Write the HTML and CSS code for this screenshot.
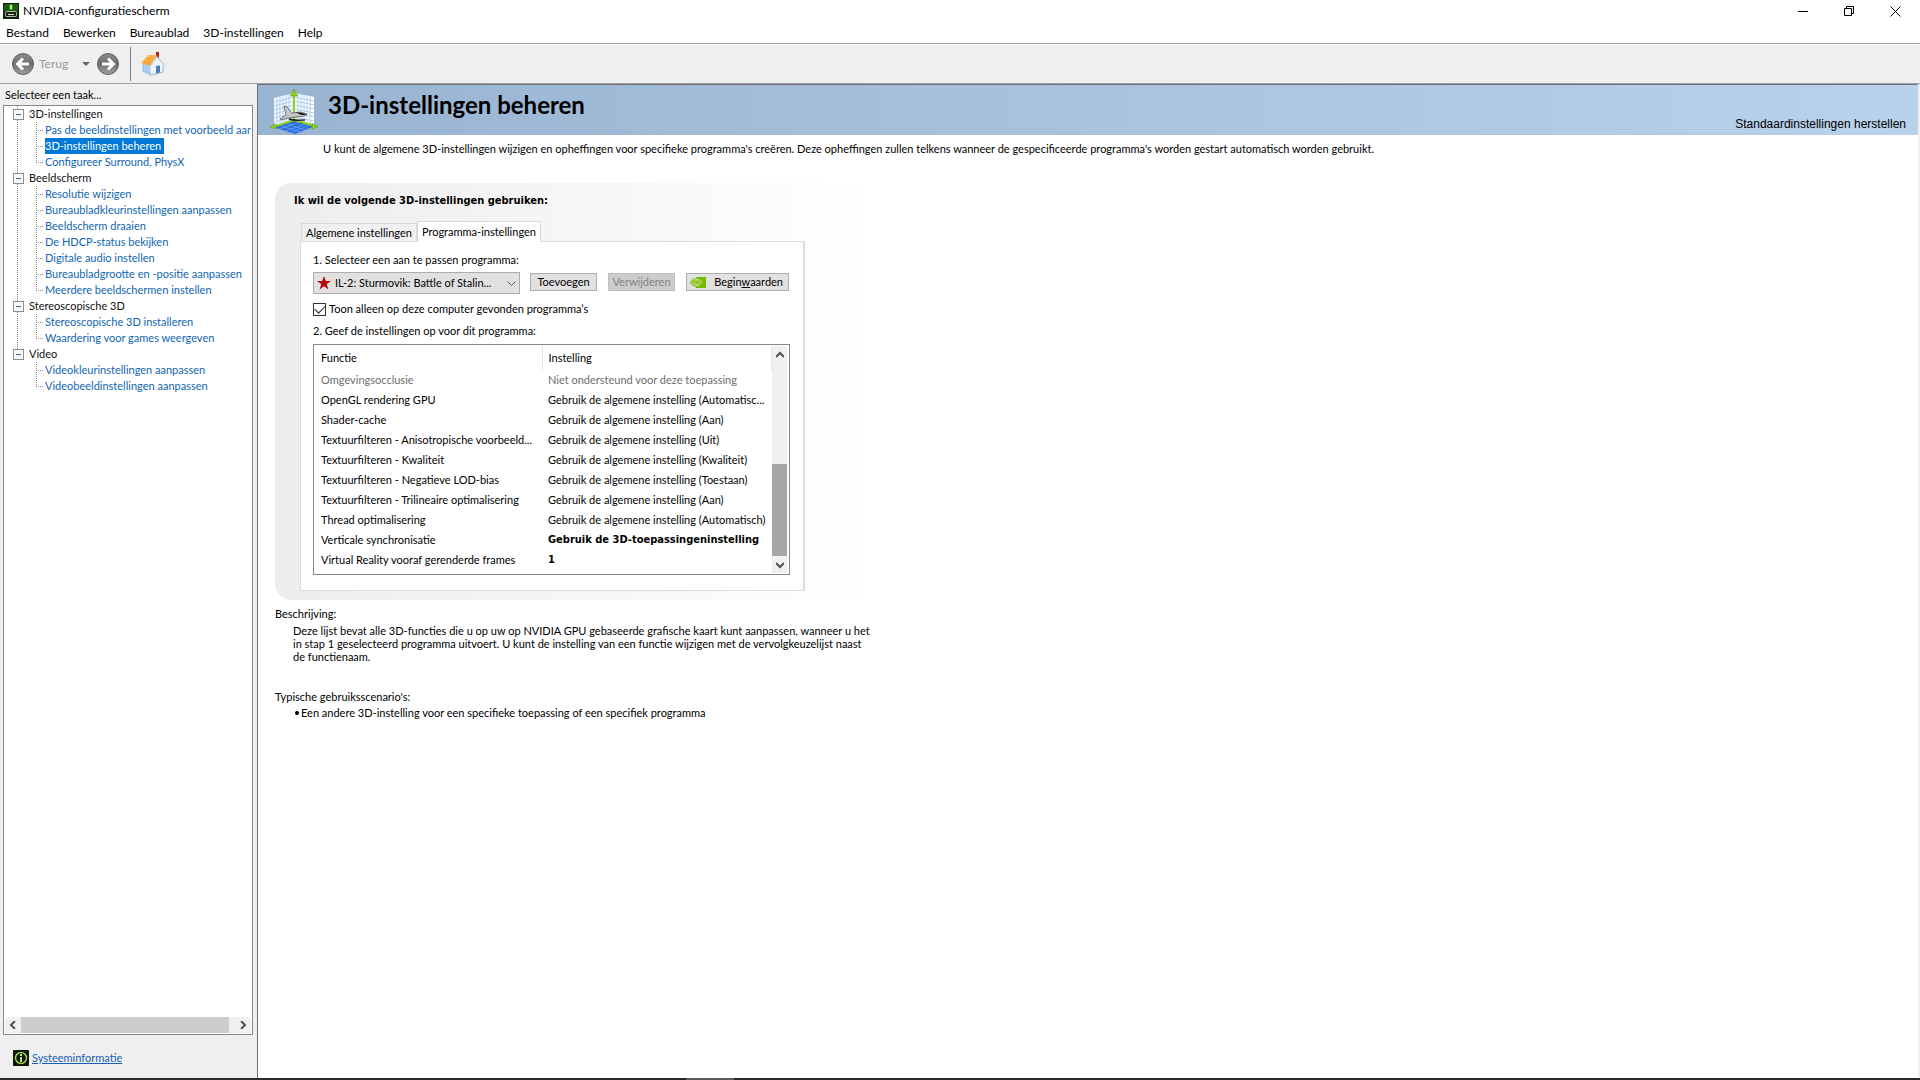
FILE: index.html
```
<!DOCTYPE html>
<html lang="nl">
<head>
<meta charset="utf-8">
<meta name="viewport" content="width=device-width, initial-scale=1">
<title>NVIDIA-configuratiescherm</title>
<link rel="stylesheet" href="styles.css">
</head>
<body>
<header>
  <div class="titlebar">
    <svg class="app-icon" width="16" height="16" viewBox="0 0 16 16" aria-hidden="true"><rect width="16" height="16" fill="#10240c"/><rect x="1" y="1" width="14" height="7" fill="#1f5a14"/><path d="M6 1h4v6H6z" fill="#2b8a1c"/><path d="M7 2h2v4H7z" fill="#b6f080"/><rect x="2.500" y="8.500" width="11" height="5" rx="1" fill="#17230f" stroke="#a9bca4"/><path d="M5 11.500h6" stroke="#dfe8d8"/></svg>
    <h1 class="app-title">NVIDIA-configuratiescherm</h1>
    <div class="window-buttons">
      <button type="button" aria-label="Minimaliseren"><svg width="11" height="11" viewBox="0 0 11 11"><path d="M0 5.500h10" stroke="#000" fill="none"/></svg></button>
      <button type="button" aria-label="Herstellen"><svg width="11" height="11" viewBox="0 0 11 11"><path d="M.5 2.500h7v7h-7zM2.500 2.500v-2h7v7h-2" stroke="#000" fill="none"/></svg></button>
      <button type="button" aria-label="Sluiten"><svg width="11" height="11" viewBox="0 0 11 11"><path d="M.5.5l10 10M10.500.5l-10 10" stroke="#000" fill="none"/></svg></button>
    </div>
  </div>
  <nav class="menubar" aria-label="Menu">
    <button type="button">Bestand</button><button type="button">Bewerken</button><button type="button">Bureaublad</button><button type="button">3D-instellingen</button><button type="button">Help</button>
  </nav>
  <div class="toolbar">
    <button type="button" class="back" disabled>
      <svg width="24" height="24" viewBox="0 0 24 24"><defs><linearGradient id="ball" x1="0" y1="0" x2="0" y2="1"><stop offset="0" stop-color="#8e8e8e"/><stop offset=".5" stop-color="#6c6c6c"/><stop offset="1" stop-color="#a2a2a2"/></linearGradient></defs><circle cx="12" cy="12" r="10.500" fill="url(#ball)" stroke="#5f5f5f"/><path d="M18 12H7M12 6.500L6.500 12l5.500 5.500" fill="none" stroke="#fff" stroke-width="3"/></svg>
      <span>Terug</span>
    </button>
    <button type="button" class="history" aria-label="Geschiedenis"><svg width="8" height="4" viewBox="0 0 8 4"><path d="M0 0h8L4 4z" fill="#666"/></svg></button>
    <button type="button" aria-label="Vooruit"><svg width="24" height="24" viewBox="0 0 24 24"><circle cx="12" cy="12" r="10.500" fill="url(#ball)" stroke="#5f5f5f"/><path d="M6 12h11M12 6.500l5.500 5.500-5.500 5.500" fill="none" stroke="#fff" stroke-width="3"/></svg></button>
    <span class="divider"></span>
    <button type="button" aria-label="Startpagina"><svg width="24" height="24" viewBox="0 0 24 24"><path d="M15 0h3v6h-3z" fill="#a8281c"/><path d="M2 12l8 1v10l-8-4z" fill="#a9cdf0"/><path d="M9 13l7-8 6 7v8l-12 3z" fill="#eef5fc"/><path d="M2 12v7l8 4 12-3v-7" fill="none" stroke="#8db6de"/><path d="M0 11L7 3l9 0-7 11z" fill="#f7a63c"/><path d="M1 11l6-7h8" fill="none" stroke="#fcc878"/><path d="M9 14l7-9 7.500 8" fill="none" stroke="#c3cfdb" stroke-width="1.400"/><path d="M15 14l4-.5v7l-4 1z" fill="#4a7cba"/></svg></button>
  </div>
</header>
<div class="workspace">
  <aside class="sidebar">
    <h2 class="side-title">Selecteer een taak...</h2>
    <div class="tree-box">
      <ul class="tree">
        <li><span class="node">3D-instellingen</span>
          <ul>
            <li><a href="#">Pas de beeldinstellingen met voorbeeld aan</a></li>
            <li><a href="#" class="selected">3D-instellingen beheren</a></li>
            <li><a href="#">Configureer Surround, PhysX</a></li>
          </ul></li>
        <li><span class="node">Beeldscherm</span>
          <ul>
            <li><a href="#">Resolutie wijzigen</a></li>
            <li><a href="#">Bureaubladkleurinstellingen aanpassen</a></li>
            <li><a href="#">Beeldscherm draaien</a></li>
            <li><a href="#">De HDCP-status bekijken</a></li>
            <li><a href="#">Digitale audio instellen</a></li>
            <li><a href="#">Bureaubladgrootte en -positie aanpassen</a></li>
            <li><a href="#">Meerdere beeldschermen instellen</a></li>
          </ul></li>
        <li><span class="node">Stereoscopische 3D</span>
          <ul>
            <li><a href="#">Stereoscopische 3D installeren</a></li>
            <li><a href="#">Waardering voor games weergeven</a></li>
          </ul></li>
        <li><span class="node">Video</span>
          <ul>
            <li><a href="#">Videokleurinstellingen aanpassen</a></li>
            <li><a href="#">Videobeeldinstellingen aanpassen</a></li>
          </ul></li>
      </ul>
      <div class="hscroll">
        <button type="button" aria-label="Naar links"><svg width="8" height="8" viewBox="0 0 8 8"><path d="M6 0L2 4l4 4" fill="none" stroke="#505050" stroke-width="2"/></svg></button>
        <span class="thumb"></span>
        <button type="button" aria-label="Naar rechts"><svg width="8" height="8" viewBox="0 0 8 8"><path d="M2 0l4 4-4 4" fill="none" stroke="#505050" stroke-width="2"/></svg></button>
      </div>
    </div>
    <div class="sysinfo">
      <svg width="16" height="16" viewBox="0 0 16 16" aria-hidden="true"><rect width="16" height="16" rx="1" fill="#0c1607"/><circle cx="8" cy="8" r="5.500" fill="none" stroke="#9bd04a" stroke-width="1.500"/><path d="M8 4v2M8 7v5" stroke="#b9e36e" stroke-width="2"/></svg>
      <a href="#">Systeeminformatie</a>
    </div>
  </aside>
  <main class="content">
    <div class="banner">
      <svg class="banner-icon" width="48" height="46" viewBox="0 0 48 46" aria-hidden="true">
        <path d="M4 9l20-5v28L4 39z" fill="#f6fafe"/><path d="M24 4l20 4v29l-20-5z" fill="#fff"/>
        <path d="M7 8v30M10 7.500v30M13 7v29M16 6v29M19 5v28M28 5v28M31 5.500v29M34 6v29M37 7v29M40 7.500v29M4 13l20-5 20 4M4 17l20-5 20 4M4 21l20-5 20 4M4 25l20-5 20 4M4 29l20-5 20 4M4 33l20-5 20 4" fill="none" stroke="#9fc4e6" stroke-width=".8"/>
        <path d="M3 38l21-7 21 6-20 8z" fill="#2a6ee0"/><path d="M9 40l21-7M15 42l21-7M20 44l20-8M9 36l21 7M15 34l20 7" stroke="#69a4f5" stroke-width=".7"/>
        <path d="M24 3v28M24 31L3 38M24 31l21 6" fill="none" stroke="#8fce22" stroke-width="2"/>
        <path d="M24 0l-3.500 7h7zM0 38.500l5-4 1.500 5zM48 37.500l-6-3v6z" fill="#8ed01c" stroke="#5a9a10" stroke-width=".6"/>
        <path d="M14 17l3 1 5 6 8-1 7 2-2 2-9 1-8 1-7 2-1-1 6-4z" fill="#c4c7ca" stroke="#5d6166" stroke-width=".8"/><path d="M25 23l8 1 4 2-6 0z" fill="#222"/><path d="M19 30c5 2 10 1 16 1" fill="none" stroke="#1b1b1b" stroke-width="1.400"/>
      </svg>
      <h2>3D-instellingen beheren</h2>
      <a href="#">Standaardinstellingen herstellen</a>
    </div>
    <div class="page">
      <p class="intro">U kunt de algemene 3D-instellingen wijzigen en opheffingen voor specifieke programma's creëren. Deze opheffingen zullen telkens wanneer de gespecificeerde programma's worden gestart automatisch worden gebruikt.</p>
      <section class="group">
        <h3>Ik wil de volgende 3D-instellingen gebruiken:</h3>
        <div class="tabs" role="tablist">
          <button type="button" role="tab" aria-selected="false">Algemene instellingen</button>
          <button type="button" role="tab" aria-selected="true" class="active">Programma-instellingen</button>
        </div>
        <div class="tab-panel" role="tabpanel">
          <label class="step" for="program">1. Selecteer een aan te passen programma:</label>
          <div class="program-row">
            <div class="select-wrap">
              <select id="program"><option>IL-2: Sturmovik: Battle of Stalin...</option></select>
              <svg class="star" width="16" height="16" viewBox="0 0 16 16"><path d="M8 1l1.800 5h5.200l-4.200 3.200 1.600 5.300L8 11.300l-4.400 3.200 1.600-5.300L1 6h5.200z" fill="#b00c10"/></svg>
              <svg class="chevron" width="9" height="6" viewBox="0 0 9 6"><path d="M.5.500l4 4 4-4" fill="none" stroke="#555"/></svg>
            </div>
            <button type="button" class="btn">Toevoegen</button>
            <button type="button" class="btn" disabled>Verwijderen</button>
            <button type="button" class="btn restore"><svg width="16" height="11" viewBox="0 0 16 11"><path d="M6 0h10v11H6z" fill="#76b900"/><path d="M6 1C3 1 1 3.500 0 5.500 1.500 8 4 10 7 10s5-2 6-4C12 3 9 1 6 1z" fill="#76b900"/><path d="M1.500 5.500C3 3 5 2 7 2.200s4 1.500 5 3.300C10.500 7.500 9 8.500 7 8.500S3 7.500 1.500 5.500zM4 5.500C5 4 6 3.700 7 3.800s2 .7 2.500 1.700C9 6.600 8 7 7 7S4.700 6.500 4 5.500z" fill="none" stroke="#e8f5cf" stroke-width=".8"/></svg><span>Begin<u>w</u>aarden</span></button>
          </div>
          <div class="check-row"><input type="checkbox" id="found" checked><label for="found">Toon alleen op deze computer gevonden programma’s</label></div>
          <p class="step">2. Geef de instellingen op voor dit programma:</p>
          <div class="grid-box">
            <table>
              <thead><tr><th class="name">Functie</th><th>Instelling</th></tr></thead>
              <tbody>
                <tr class="off"><td>Omgevingsocclusie</td><td>Niet ondersteund voor deze toepassing</td></tr>
                <tr><td>OpenGL rendering GPU</td><td>Gebruik de algemene instelling (Automatisc...</td></tr>
                <tr><td>Shader-cache</td><td>Gebruik de algemene instelling (Aan)</td></tr>
                <tr><td>Textuurfilteren - Anisotropische voorbeeld...</td><td>Gebruik de algemene instelling (Uit)</td></tr>
                <tr><td>Textuurfilteren - Kwaliteit</td><td>Gebruik de algemene instelling (Kwaliteit)</td></tr>
                <tr><td>Textuurfilteren - Negatieve LOD-bias</td><td>Gebruik de algemene instelling (Toestaan)</td></tr>
                <tr><td>Textuurfilteren - Trilineaire optimalisering</td><td>Gebruik de algemene instelling (Aan)</td></tr>
                <tr><td>Thread optimalisering</td><td>Gebruik de algemene instelling (Automatisch)</td></tr>
                <tr><td>Verticale synchronisatie</td><td class="own">Gebruik de 3D-toepassingeninstelling</td></tr>
                <tr><td>Virtual Reality vooraf gerenderde frames</td><td class="own">1</td></tr>
              </tbody>
            </table>
            <div class="vscroll">
              <button type="button" aria-label="Omhoog"><svg width="8" height="8" viewBox="0 0 8 8"><path d="M0 6l4-4 4 4" fill="none" stroke="#505050" stroke-width="2"/></svg></button>
              <span class="thumb"></span>
              <button type="button" aria-label="Omlaag"><svg width="8" height="8" viewBox="0 0 8 8"><path d="M0 2l4 4 4-4" fill="none" stroke="#505050" stroke-width="2"/></svg></button>
            </div>
          </div>
        </div>
      </section>
      <section class="notes">
        <h4>Beschrijving:</h4>
        <p>Deze lijst bevat alle 3D-functies die u op uw op NVIDIA GPU gebaseerde grafische kaart kunt aanpassen, wanneer u het<br>in stap 1 geselecteerd programma uitvoert. U kunt de instelling van een functie wijzigen met de vervolgkeuzelijst naast<br>de functienaam.</p>
        <h4>Typische gebruiksscenario's:</h4>
        <ul><li>Een andere 3D-instelling voor een specifieke toepassing of een specifiek programma</li></ul>
      </section>
    </div>
  </main>
</div>
<div class="taskbar-edge"><span></span></div>
</body>
</html>
```
FILE: styles.css
```
* { box-sizing: border-box; }
body, h1, h2, h3, h4, p, ul { margin: 0; padding: 0; }
ul { list-style: none; }
h1, h2, h3, h4 { font-size: inherit; font-weight: 400; }
svg { display: block; flex: none; }
button, select, input { font: inherit; color: inherit; margin: 0; }
button { padding: 0; border: 0; background: none; }

body {
  display: flex;
  flex-direction: column;
  min-height: 100vh;
  background: #efefef;
  color: #000;
  font: 11px/16px Lato, "Open Sans", sans-serif;
}

/* Title bar and menus */
.titlebar {
  display: flex;
  align-items: center;
  height: 22px;
  padding: 0 2px 0 3px;
  background: #fff;
  font-size: 12px;
}
.app-title { margin-left: 4px; flex: 1; }
.window-buttons { display: flex; }
.window-buttons button { display: grid; place-items: center; width: 46px; height: 22px; }
.menubar {
  display: flex;
  gap: 14px;
  height: 21px;
  padding: 0 6px;
  background: #fff;
  font-size: 12px;
}
.toolbar {
  display: flex;
  align-items: center;
  height: 41px;
  padding-left: 11px;
  border-top: 1px solid #a0a0a0;
  border-bottom: 1px solid #a0a0a0;
  box-shadow: inset 0 1px #fff;
}
.back { display: flex; align-items: center; gap: 4px; width: 66px; color: #9a9a9a; font-size: 12px; }
.history { margin: 0 6px 0 5px; }
.divider { width: 1px; height: 34px; margin: 0 10px 0 10px; background: #808080; }

/* Task tree */
.workspace { display: grid; grid-template-columns: 257px minmax(0, 1fr); flex: 1; }
.sidebar { display: flex; flex-direction: column; padding: 2px 4px 0 3px; }
.side-title { height: 19px; padding-left: 2px; line-height: 17px; }
.tree-box {
  display: flex;
  flex: 1;
  flex-direction: column;
  justify-content: space-between;
  padding: 0 1px 1px;
  border: 1px solid #828790;
  background: #fff;
}
.tree { overflow: hidden; white-space: nowrap; color: #111; }
.tree > li {
  margin-left: 12px;
  background: repeating-linear-gradient(#888 0 1px, transparent 1px 2px) 0 0 / 1px 100% no-repeat;
}
.tree > li:last-child { background-size: 1px 8px; }
.node { display: flex; align-items: center; height: 16px; margin-left: -4px; }
.node::before {
  content: "";
  width: 9px;
  height: 9px;
  margin-right: 5px;
  border: 1px solid #919191;
  background: linear-gradient(#4b63a7, #4b63a7) center / 5px 1px no-repeat #f7f7f7;
}
.tree ul { margin-left: 19px; }
.tree ul li {
  display: flex;
  height: 16px;
  background:
    repeating-linear-gradient(#888 0 1px, transparent 1px 2px) 0 0 / 1px 100% no-repeat,
    repeating-linear-gradient(90deg, #888 0 1px, transparent 1px 2px) 0 8px / 8px 1px no-repeat;
}
.tree ul li:last-child { background-size: 1px 8px, 8px 1px; }
.tree a { margin-left: 9px; color: #0f66b4; text-decoration: none; }
.tree a.selected { padding-right: 3px; background: #0078d7; color: #fff; }
.hscroll { display: flex; justify-content: space-between; height: 16px; background: #f0f0f0; }
.hscroll button { display: grid; place-items: center; width: 16px; }
.hscroll .thumb { flex: 1; margin-right: 6px; background: #cdcdcd; }
.sysinfo { display: flex; align-items: center; gap: 3px; height: 43px; padding: 2px 10px 0; }
.sysinfo a { color: #1660b8; }

/* Page banner */
.content {
  margin-right: 2px;
  border-top: 1px solid #69707c;
  border-left: 1px solid #69707c;
  background: #fff;
}
.banner {
  display: flex;
  height: 50px;
  padding: 4px 12px 0 12px;
  background: linear-gradient(90deg, #99b4d1, #b9d1ea);
}
.banner h2 { flex: 1; margin-left: 10px; font-size: 24px; font-weight: 700; line-height: 32px; }
.banner a {
  align-self: flex-end;
  padding-bottom: 3px;
  color: #000;
  font: 12px/16px "Liberation Sans", sans-serif;
  text-decoration: none;
}
.page { padding: 6px 17px; }
.intro { padding-left: 48px; }

/* Settings group */
.group {
  max-width: 600px;
  margin-top: 26px;
  padding: 10px 0 9px 19px;
  border-radius: 16px 0 0 16px;
  background: linear-gradient(90deg, #ededed, #fff);
}
.group h3, .own { font-family: "DejaVu Sans Condensed", "DejaVu Sans", sans-serif; font-weight: 700; }
.tabs { display: flex; align-items: flex-end; height: 20px; margin: 12px 0 0 7px; }
.tabs button { height: 18px; padding: 0 4px; border: 1px solid #d9d9d9; border-bottom: 0; background: #f0f0f0; }
.tabs button.active {
  position: relative;
  z-index: 1;
  height: 21px;
  margin-bottom: -1px;
  background: #fff;
}
.tab-panel {
  width: 505px;
  margin-left: 6px;
  padding: 10px 13px 15px 12px;
  border: 1px solid #dcdcdc;
  border-right-width: 2px;
  background: #fff;
}
.step { display: block; }
.program-row { display: flex; align-items: flex-start; gap: 11px; margin-top: 4px; }
.select-wrap { position: relative; width: 207px; margin-right: -1px; }
.select-wrap select {
  width: 100%;
  height: 22px;
  padding: 0 18px 0 21px;
  appearance: none;
  border: 1px solid #adadad;
  border-radius: 0;
  background: #e1e1e1;
}
.star { position: absolute; left: 3px; top: 3px; }
.chevron { position: absolute; right: 4px; top: 9px; }
.btn { width: 67px; height: 18px; margin-top: 1px; border: 1px solid #adadad; background: #e1e1e1; line-height: 16px; }
.btn:disabled { border-color: #bfbfbf; background: #ccc; color: #838383; }
.restore { display: flex; align-items: center; justify-content: space-between; width: 103px; padding: 0 5px 0 3px; }
.check-row { display: flex; align-items: center; gap: 3px; height: 16px; margin: 7px 0 6px; }
.check-row input {
  display: grid;
  place-items: center;
  width: 13px;
  height: 13px;
  appearance: none;
  border: 1px solid #333;
  background: #fff;
}
.check-row input:checked::before {
  content: "";
  width: 9px;
  height: 5px;
  margin-top: -3px;
  border: solid #222;
  border-width: 0 0 1px 1px;
  rotate: -45deg;
}

/* Feature table */
.grid-box { display: flex; margin-top: 5px; padding: 1px 2px 1px 1px; border: 1px solid #828790; }
table { flex: 1; margin-bottom: 3px; border-collapse: collapse; table-layout: fixed; white-space: nowrap; }
th, td { height: 20px; padding: 0 0 0 6px; text-align: left; }
th { height: 24px; border-right: 1px solid #e5e5e5; font-weight: 400; }
th.name { width: 227px; }
.off { color: #6d6d6d; }
.vscroll { display: flex; flex-direction: column; width: 15px; background: #f0f0f0; }
.vscroll button { display: grid; place-items: center; height: 17px; }
.vscroll .thumb { height: 92px; margin-top: auto; background: #a6a6a6; }

/* Explanatory text */
.notes { margin-top: 6px; }
.notes p { margin: 2px 0 26px 18px; line-height: 13px; white-space: nowrap; }
.notes li { display: flex; align-items: center; gap: 2px; margin-left: 20px; }
.notes li::before { content: ""; width: 4px; height: 4px; border-radius: 50%; background: #000; }

.taskbar-edge { height: 2px; padding-left: 686px; background: #2b292c; }
.taskbar-edge span { display: block; width: 48px; height: 2px; background: #5c5b5d; }
```
